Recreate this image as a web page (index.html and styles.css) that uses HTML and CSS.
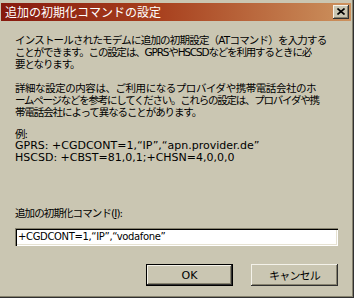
FILE: index.html
```html
<!DOCTYPE html>
<html lang="ja">
<head>
    <meta charset="UTF-8">
    <title>追加の初期化コマンドの設定</title>
    <link rel="stylesheet" href="styles.css">
</head>
<body>
    <div class="window">
        <!-- タイトルバー -->
        <div class="titlebar">
            <span class="title">追加の初期化コマンドの設定</span>
            <span class="close-btn">
                <svg width="8" height="7" viewBox="0 0 8 7">
                    <path d="M0.5 0.5 L7.5 6.5 M7.5 0.5 L0.5 6.5" stroke="#000" stroke-width="1.6"/>
                </svg>
            </span>
        </div>

        <div class="content">
            <p class="para">
                <span class="line sp-mid">インストールされたモデムに追加の初期設定（ATコマンド）を入力する</span>
                <span class="line sp-tight">ことができます。この設定は、GPRSやHSCSDなどを利用するときに必</span>
                <span class="line">要となります。</span>
            </p>
            <p class="para">
                <span class="line sp-wide">詳細な設定の内容は、ご利用になるプロバイダや携帯電話会社のホ</span>
                <span class="line sp-narrow">ームページなどを参考にしてください。これらの設定は、プロバイダや携</span>
                <span class="line">帯電話会社によって異なることがあります。</span>
            </p>
            <p class="para example">
                <span class="line">例:</span>
                <span class="line latin">GPRS: +CGDCONT=1,“IP”,“apn.provider.de”</span>
                <span class="line latin">HSCSD: +CBST=81,0,1;+CHSN=4,0,0,0</span>
            </p>

            <label class="field-label" for="init-cmd">追加の初期化コマンド(<u>I</u>):</label>
            <div class="input-box">
                <input id="init-cmd" type="text" value="+CGDCONT=1,“IP”,“vodafone”">
            </div>

            <div class="buttons">
                <button class="btn default">OK</button>
                <button class="btn">キャンセル</button>
            </div>
        </div>
    </div>
</body>
</html>
```
FILE: styles.css
```css
body {
    margin: 0;
    font-family: "DejaVu Sans", "Noto Sans CJK JP", sans-serif;
    font-size: 11px;
    color: #000;
    background-color: #cac6b2;
}
.window {
    width: 354px;
    height: 298px;
    box-sizing: border-box;
    background-color: #cac6b2;
    padding: 3px 2px 0 1px;
    border-right: 1px solid #303030;
    border-bottom: 1px solid #303030;
    box-shadow: inset -1px -1px #86826e;
    display: flex;
    flex-direction: column;
}
.titlebar {
    height: 18px;
    background: linear-gradient(to right, #861a0e, #a8401e 45%, #cc925e);
    display: flex;
    align-items: center;
    justify-content: space-between;
    padding: 0 2px 0 4px;
}
.title {
    color: #fff;
    font-family: "Noto Sans CJK JP", sans-serif;
    font-size: 12px;
    line-height: 18px;
}
.close-btn {
    width: 16px;
    height: 14px;
    box-sizing: border-box;
    background-color: #cac6b2;
    box-shadow: inset -1px -1px #303030, inset 1px 1px #f4f2ea, inset -2px -2px #86826e;
    display: flex;
    align-items: center;
    justify-content: center;
    padding-bottom: 1px;
}
.content {
    padding: 13px 13px 0 14px;
    display: flex;
    flex-direction: column;
}
.para {
    margin: 0 0 12px;
    font-size: 10.5px;
    line-height: 12px;
    letter-spacing: -1.1px;
}
.line {
    display: block;
    white-space: nowrap;
}
/* 各行を右端（約332px）に揃えるための字間調整 */
.line.sp-wide {
    letter-spacing: -0.45px;
}
.line.sp-mid {
    letter-spacing: -0.8px;
}
.line.sp-tight {
    letter-spacing: -1.17px;
}
.line.sp-narrow {
    letter-spacing: -1.25px;
}
.line.latin {
    font-size: 11px;
    letter-spacing: 0;
}
.example {
    margin-top: -2px;
}
.field-label {
    margin-top: 31px;
    font-size: 10.5px;
    line-height: 12px;
    letter-spacing: -0.9px;
}
.input-box {
    margin-top: 9px;
    height: 18px;
    box-sizing: border-box;
    background-color: #fff;
    box-shadow: inset 1px 1px #86826e, inset 2px 2px #000, inset -1px -1px #fff, inset -2px -2px #e6e2d2;
    padding: 2px 3px 0 3px;
}
.input-box input {
    border: none;
    outline: none;
    background: transparent;
    font-family: "DejaVu Sans", "Noto Sans CJK JP", sans-serif;
    font-size: 10px;
    letter-spacing: -0.35px;
    width: 100%;
    padding: 0;
    height: 14px;
    line-height: 14px;
}
.buttons {
    margin-top: 18px;
    display: flex;
    justify-content: flex-end;
    gap: 18px;
}
.btn {
    width: 87px;
    height: 22px;
    box-sizing: border-box;
    border: none;
    margin: 0;
    padding: 0;
    background-color: #cac6b2;
    font-family: "DejaVu Sans", "Noto Sans CJK JP", sans-serif;
    font-size: 11px;
    letter-spacing: -0.8px;
    color: #000;
    box-shadow: inset -1px -1px #303030, inset 1px 1px #f4f2ea, inset -2px -2px #86826e;
}
.btn.default {
    letter-spacing: 0;
    box-shadow: inset 0 0 0 1px #000, inset -2px -2px #303030, inset 2px 2px #f4f2ea, inset -3px -3px #86826e;
}
```
